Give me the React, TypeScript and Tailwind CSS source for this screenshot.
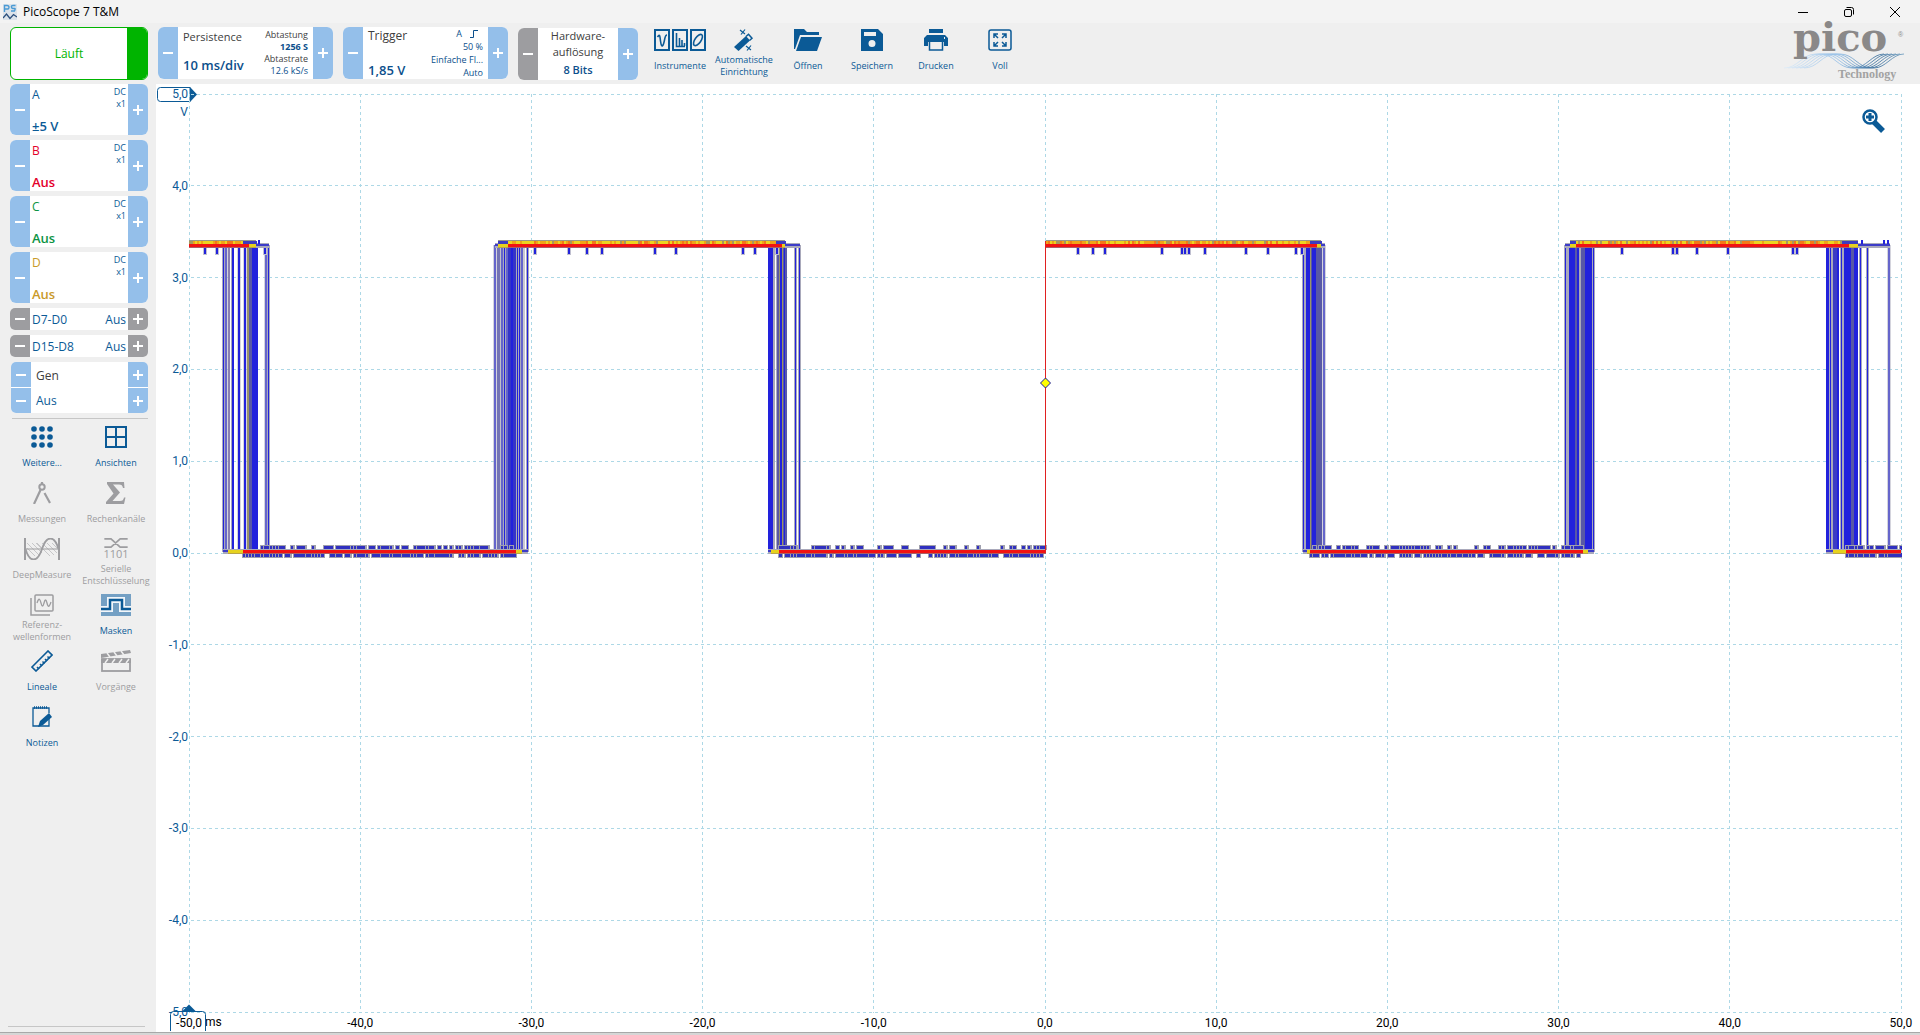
import type { ReactNode } from "react";

const PLOT_W = 1713;
const PLOT_H = 919;

const BLUE = "#2222dc";
const HAZE = "#a9a9bb";
const PURPLE = "#5858a6";
const OLIVE = "#9a9468";
const YELLOW = "#e6d21e";
const RED = "#f21212";

const channels = [
  { name: "A", value: "±5 V", color: "text-[#0b5a96]" },
  { name: "B", value: "Aus", color: "text-[#e4002b]" },
  { name: "C", value: "Aus", color: "text-[#0c9444]" },
  { name: "D", value: "Aus", color: "text-[#c99a2a]" },
];

const yLabels = ["5,0", "4,0", "3,0", "2,0", "1,0", "0,0", "-1,0", "-2,0", "-3,0", "-4,0", "-5,0"];
const xLabels = ["-50,0", "-40,0", "-30,0", "-20,0", "-10,0", "0,0", "10,0", "20,0", "30,0", "40,0", "50,0"];

// single edges, drawn as a thin line with a soft border
const edges = [
  34.5, 37, 43.5, 50, 56, 77, 79.5, 306, 310, 313, 315.5, 318, 328.5, 330.5, 333, 338.5, 588.5, 592,
  606.5, 610.5, 1114.5, 1135, 1376.5, 1404.5, 1641.5, 1652.5, 1671.5, 1678.5, 1700,
];

// bundles of edges: x, width, colour
const bundles: [number, number, string][] = [
  [39, 2, "#8a80b0"],
  [43, 2, BLUE],
  [49, 2, BLUE],
  [55, 2, BLUE],
  [58, 2, OLIVE],
  [60, 3, PURPLE],
  [63, 6, BLUE],
  [308, 3, "#7474b4"],
  [319, 8, "#3535c8"],
  [322, 2, BLUE],
  [334, 2, "#c9c9d2"],
  [579, 5, BLUE],
  [584, 2, HAZE],
  [588, 2, PURPLE],
  [590, 1, OLIVE],
  [591, 2, BLUE],
  [593, 1, OLIVE],
  [594, 4, PURPLE],
  [595, 1, BLUE],
  [1115, 2, HAZE],
  [1117, 4, BLUE],
  [1121, 1, OLIVE],
  [1122, 2, PURPLE],
  [1123, 4, BLUE],
  [1127, 6, PURPLE],
  [1378, 2, HAZE],
  [1380, 6, BLUE],
  [1386, 2, PURPLE],
  [1388, 2, BLUE],
  [1390, 2, HAZE],
  [1392, 4, PURPLE],
  [1396, 7, BLUE],
  [1637, 3, BLUE],
  [1642, 2, HAZE],
  [1644, 4, "#3d3dc4"],
  [1648, 2, BLUE],
  [1653, 2, HAZE],
  [1655, 7, BLUE],
  [1662, 3, PURPLE],
  [1665, 4, BLUE],
];

const spikes = [
  15, 27, 75, 345, 379, 397, 412, 465, 486, 553, 565, 587, 888, 903, 915, 972, 992, 995, 999, 1015, 1056,
  1078, 1106, 1112, 1432, 1483, 1487, 1507, 1538, 1603, 1607,
];

// blue start, yellow start, red start, red end, yellow end, blue end
const highs = [
  [0, 0, 0, 60, 67, 80],
  [306, 309, 319, 593, 596, 611],
  [857, 857, 857, 1128, 1132, 1136],
  [1376, 1381, 1387, 1660, 1669, 1701],
];
const lows = [
  [34, 39, 54, 327, 333, 339],
  [579, 582, 590, 857, 857, 857],
  [1114, 1118, 1121, 1394, 1399, 1405],
  [1637, 1644, 1657, 1712, 1712, 1712],
];

function noise(n: number) {
  const v = Math.sin(n * 12.9898) * 43758.5453;
  return v - Math.floor(v);
}

// neighbouring samples tend to share a state, so the noise comes in runs
function clustered(x: number, seed: number) {
  return noise(x + seed) * 0.6 + noise(Math.floor(x / 12) + seed) * 0.4;
}

function Level({ y, seg }: { y: number; seg: number[] }) {
  const [b0, y0, r0, r1, y1, b1] = seg;
  return (
    <>
      <rect x={b0} y={y - 2} width={b1 - b0} height={5} fill={HAZE} />
      <rect x={b0} y={y - 1} width={b1 - b0} height={2} fill="#3c3cc8" />
      <rect x={y0} y={y - 1} width={y1 - y0} height={4} fill="#b8a448" />
      <rect x={y0} y={y - 1} width={y1 - y0} height={3} fill={YELLOW} />
      <rect x={r0} y={y - 1} width={r1 - r0} height={4} fill="#a86068" />
      <rect x={r0} y={y - 1} width={r1 - r0} height={3} fill={RED} />
    </>
  );
}

function HighNoise({ seg }: { seg: number[] }) {
  const start = seg[0] === 0 ? 0 : seg[1];
  const end = seg[4];
  const cells = [];
  for (let x = start; x < end; x += 2) {
    const r = noise(x);
    const fill = r < 0.12 ? "#a8985c" : r < 0.45 ? "#f0a418" : r < 0.62 ? "#f47818" : "#ecd420";
    const edge = x < seg[2] || x > seg[3] - 8;
    cells.push(<rect key={x} x={x} y={147} width={2} height={3} fill={edge ? "#3c3cc0" : fill} />);
  }
  return (
    <>
      <rect x={start} y={146} width={end - start} height={2} fill="#99998c" />
      {cells}
    </>
  );
}

function LowNoise({ seg }: { seg: number[] }) {
  const haze = [];
  const core = [];
  for (let x = seg[2]; x < seg[3]; x += 3) {
    if (clustered(x, 7) > 0.4) {
      haze.push(<rect key={`t${x}`} x={x - 1} y={451} width={5} height={5} fill="#a0a0ae" />);
      core.push(<rect key={`t${x}`} x={x} y={452} width={noise(x) > 0.5 ? 3 : 2} height={4} fill="#3030c0" />);
    }
    if (clustered(x, 91) > 0.3) {
      haze.push(<rect key={`b${x}`} x={x - 1} y={459} width={5} height={5} fill="#a0a0ae" />);
      core.push(<rect key={`b${x}`} x={x} y={459} width={noise(x) > 0.5 ? 3 : 2} height={4} fill="#3030c0" />);
    }
  }
  return (
    <>
      {haze}
      {core}
    </>
  );
}

function Plot() {
  const steps = Array.from({ length: 11 }, (_, i) => i);
  return (
    <svg
      viewBox={`0 0 ${PLOT_W} ${PLOT_H}`}
      preserveAspectRatio="none"
      className="block h-0 w-full min-w-0 flex-1"
      role="img"
      aria-label="Persistence"
    >
      <g stroke="#add8e6" strokeWidth={1} strokeDasharray="3 3">
        {steps.map((i) => {
          const x = Math.floor(i * 171.2) + 0.5;
          return <line key={`v${i}`} x1={x} x2={x} y1={0} y2={PLOT_H} />;
        })}
        {steps.map((i) => {
          const y = Math.floor(i * 91.8) + 0.5;
          return <line key={`h${i}`} x1={2} x2={PLOT_W} y1={y} y2={y} />;
        })}
      </g>
      {edges.map((x) => (
        <g key={x}>
          <rect x={x - 1.5} y={151} width={3} height={307} fill={HAZE} />
          <rect x={x - 0.5} y={151} width={1} height={307} fill={BLUE} />
        </g>
      ))}
      {bundles.map(([x, w, fill]) => (
        <rect key={x} x={x} y={151} width={w} height={307} fill={fill} />
      ))}
      {spikes.map((x) => (
        <g key={x}>
          <rect x={x - 1} y={152} width={4} height={9} fill="#c0c0d0" />
          <rect x={x} y={152} width={2} height={8} fill={BLUE} />
        </g>
      ))}
      {lows.map((seg) => (
        <LowNoise key={seg[0]} seg={seg} />
      ))}
      {highs.map((seg) => (
        <Level key={seg[0]} y={151} seg={seg} />
      ))}
      {highs.map((seg) => (
        <HighNoise key={seg[0]} seg={seg} />
      ))}
      {lows.map((seg) => (
        <Level key={seg[0]} y={457} seg={seg} />
      ))}
      {[69, 1672, 1694, 1698].map((x) => (
        <rect key={x} x={x} y={146} width={2} height={4} fill={BLUE} />
      ))}
      <rect x={856} y={147} width={1} height={312} fill="#e02020" />
      <path d="M856.5 284l5 5-5 5-5-5z" fill="#ffff00" stroke="#1a1a9c" />
    </svg>
  );
}

function Icon({ w = 24, children }: { w?: number; children: ReactNode }) {
  return (
    <svg width={w} height={22} viewBox={`0 0 ${w} 22`} fill="none" stroke="currentColor" aria-hidden="true">
      {children}
    </svg>
  );
}

function InstrumentsIcon() {
  return (
    <Icon w={52}>
      <path d="M1 1h14v20H1zM19 1h14v20H19zM37 1h14v20H37z" strokeWidth="2" />
      <path d="M3.500 8C6 4 6 8 6.500 12s1.500 7 3 3 1-9 3.500-9" strokeWidth="1.600" />
      <path d="M22.500 4v13.500H31M25.500 17V9M28 17v-6M30.500 17v-3" strokeWidth="1.600" />
      <ellipse cx="44" cy="11" rx="3" ry="6.500" strokeWidth="1.600" transform="rotate(35 44 11)" />
    </Icon>
  );
}

function WandIcon() {
  return (
    <Icon>
      <path d="M2 18L14 7l4 4.500L6.500 22z" fill="currentColor" stroke="none" />
      <path d="M14 7.500l2.500-2.200 3.500 4-2.500 2.200" strokeWidth="1.500" />
      <path d="M8 1l5 4M13 0.500l-4 5M14 17l5 4M19 16.500l-4 5" strokeWidth="1.200" />
    </Icon>
  );
}

function FolderIcon() {
  return (
    <Icon w={28}>
      <g fill="currentColor" stroke="none">
        <path d="M0 0h10l3 3h12v3H6L1 20H0z" />
        <path d="M7 8h21l-5 14H2z" />
      </g>
    </Icon>
  );
}

function SaveIcon() {
  return (
    <Icon w={22}>
      <path
        d="M0 0h17l5 5v17H0zM3 3v4h12V3zM11 11a3.500 3.500 0 100 7 3.500 3.500 0 000-7z"
        fill="currentColor"
        fillRule="evenodd"
        stroke="none"
      />
    </Icon>
  );
}

function PrintIcon() {
  return (
    <Icon>
      <path d="M5 0h14v4H5zM3 6h18l3 3v8h-4v-4H4v4H0V9z" fill="currentColor" stroke="none" />
      <path d="M5.500 13v8h13v-8" strokeWidth="1.500" />
      <path d="M20 9h1" stroke="#efefef" strokeWidth="2" />
    </Icon>
  );
}

function FullIcon() {
  return (
    <Icon>
      <rect x="1" y="1" width="22" height="20" rx="2" strokeWidth="1.500" />
      <path
        d="M6 9V5h4M6 5l4 4M18 9V5h-4M18 5l-4 4M6 13v4h4M6 17l4-4M18 13v4h-4M18 17l-4-4"
        strokeWidth="1.500"
      />
    </Icon>
  );
}

function MoreIcon() {
  return (
    <Icon w={22}>
      <g fill="currentColor" stroke="none">
        {[3, 11, 19].map((y) => [3, 11, 19].map((x) => <circle key={`${x}-${y}`} cx={x} cy={y} r="2.800" />))}
      </g>
    </Icon>
  );
}

function ViewsIcon() {
  return (
    <Icon w={22}>
      <path d="M1 1h20v20H1zM11 1v20M1 11h20" strokeWidth="2" />
    </Icon>
  );
}

function CompassIcon() {
  return (
    <Icon w={20}>
      <circle cx="10" cy="5" r="2.700" strokeWidth="2" />
      <path d="M10 0v2M8.500 8L2 22M12.500 11L18 21" strokeWidth="2.200" />
    </Icon>
  );
}

function SigmaIcon() {
  return (
    <Icon w={20}>
      <path
        d="M1 0h17l.500 6H17c-.500-2.500-1.500-3.500-4-3.500H7l7 8L6.500 19H14c2.500 0 3.500-1 4-3.500h1.500L18 22H0v-2l7.500-8.500L1 2z"
        fill="currentColor"
        stroke="none"
      />
    </Icon>
  );
}

function DeepMeasureIcon() {
  return (
    <Icon w={36}>
      <path
        d="M3 5l12 12M3 10l8 8M8 5l10 10M13 5l5 5M18 5l12 12M23 5l10 10M28 5l5 5M18 10l8 8M12 5l6 6"
        strokeWidth="0.500"
      />
      <path d="M1 0v22M35 0v22" strokeWidth="2" />
      <path d="M1 11h34" strokeWidth="1.200" />
      <path d="M1.500 11c4 14 12 14 16.500 0s12.500-14 16.500 0" strokeWidth="1.800" />
    </Icon>
  );
}

function SerialIcon() {
  return (
    <span className="flex h-[22px] flex-col items-center">
      <svg width="28" height="12" viewBox="0 0 28 12" fill="none" stroke="currentColor" aria-hidden="true">
        <path d="M0 1h8l11 10h9M0 11h8L19 1h9" strokeWidth="2" />
      </svg>
      <span className="text-[11px] leading-3">1101</span>
    </span>
  );
}

function ReferenceIcon() {
  return (
    <Icon>
      <path d="M1 4v17h19" strokeWidth="1.500" />
      <rect x="5" y="1" width="18" height="16" rx="1" strokeWidth="1.500" />
      <path d="M7 9c2-6 3-4 4 0s2 4 3 0 2-4 3 0 2 5 4-1" strokeWidth="1.300" />
    </Icon>
  );
}

function MasksIcon() {
  return (
    <Icon w={30}>
      <path d="M0 0h30v22H0z" fill="#74a0c4" stroke="none" />
      <path d="M0 15h9V6h12v9h9" stroke="#f2f6fa" strokeWidth="6" />
      <path d="M0 15h9V6h12v9h9" strokeWidth="2.500" />
    </Icon>
  );
}

function RulerIcon() {
  return (
    <Icon w={22}>
      <path d="M1 17L17 1l4 4L5 21z" strokeWidth="1.600" />
      <path d="M8 19l-2-2M11 16l-2-2M13.500 13.500l-2-2M16 11l-2-2M18.500 8.500l-2-2" strokeWidth="1.500" />
    </Icon>
  );
}

function ActionsIcon() {
  return (
    <Icon w={30}>
      <rect x="1" y="9" width="28" height="12" strokeWidth="1.800" />
      <path d="M0 9h30v4H0zM0 4L29 0l1 3L0 8z" fill="currentColor" stroke="none" />
      <path
        d="M4 13l3-4M11 13l3-4M18 13l3-4M25 13l3-4M6 3l3 4M13 2l3 4M20 1l3 4"
        stroke="#efefef"
        strokeWidth="1.500"
      />
    </Icon>
  );
}

function NotesIcon() {
  return (
    <Icon w={20}>
      <path d="M17 12v8H1V2h16v5" strokeWidth="1.300" />
      <path d="M2 1.500h14" strokeWidth="2.500" strokeDasharray="1 1" />
      <path d="M6 21l2-6L17 7l3 4-9 8z" fill="currentColor" stroke="none" />
    </Icon>
  );
}

const tools = [
  { label: "Instrumente", icon: <InstrumentsIcon /> },
  { label: "Automatische Einrichtung", icon: <WandIcon /> },
  { label: "Öffnen", icon: <FolderIcon /> },
  { label: "Speichern", icon: <SaveIcon /> },
  { label: "Drucken", icon: <PrintIcon /> },
  { label: "Voll", icon: <FullIcon /> },
];

const sideTools = [
  { label: "Weitere...", icon: <MoreIcon />, off: false },
  { label: "Ansichten", icon: <ViewsIcon />, off: false },
  { label: "Messungen", icon: <CompassIcon />, off: true },
  { label: "Rechenkanäle", icon: <SigmaIcon />, off: true },
  { label: "DeepMeasure", icon: <DeepMeasureIcon />, off: true },
  { label: "Serielle Entschlüsselung", icon: <SerialIcon />, off: true },
  { label: "Referenz- wellenformen", icon: <ReferenceIcon />, off: true },
  { label: "Masken", icon: <MasksIcon />, off: false },
  { label: "Lineale", icon: <RulerIcon />, off: false },
  { label: "Vorgänge", icon: <ActionsIcon />, off: true },
  { label: "Notizen", icon: <NotesIcon />, off: false },
];

function Step({ plus = false, gray = false, label }: { plus?: boolean; gray?: boolean; label: string }) {
  return (
    <button
      type="button"
      aria-label={label}
      className={`flex w-5 shrink-0 items-center justify-center text-white ${gray ? "bg-[#9d9da0]" : "bg-[#94bfea]"}`}
    >
      <svg width="10" height="10" viewBox="0 0 10 10" stroke="currentColor" strokeWidth="2" aria-hidden="true">
        <path d={plus ? "M0 5h10M5 0v10" : "M0 5h10"} />
      </svg>
    </button>
  );
}

function ToolButton({ label, icon, off = false }: { label: string; icon: ReactNode; off?: boolean }) {
  return (
    <button
      type="button"
      disabled={off}
      className={`flex h-14 flex-col items-center gap-[3px] ${off ? "text-[#9d9da0]" : "text-[#0b5a96]"}`}
    >
      {icon}
      <span className="flex h-6 w-16 items-center justify-center text-center text-[9px] leading-3">{label}</span>
    </button>
  );
}

function TitleBar() {
  return (
    <header className="flex h-[23px] items-center bg-[#f3f3f3] pr-0.5 pl-[3px] text-black">
      <svg width="14" height="16" viewBox="0 0 14 16" fill="none" aria-hidden="true">
        <path d="M0 0h14v16H0z" fill="#dce3ea" />
        <path d="M1.500 8V1.500H4q2 0 2 1.800T4 5H2M12.500 1.500H10q-2 0-1.500 1.700T11 4.500t.500 2.500H8" stroke="#4a9ad4" strokeWidth="1.400" />
        <path d="M0 14l3.500-4L7 14.500l3.500-4L14 13" stroke="#2c4f7c" strokeWidth="1.300" />
      </svg>
      <h1 className="ml-1.5 text-xs leading-4">PicoScope 7 T&amp;M</h1>
      <div className="ml-auto flex">
        <button type="button" aria-label="Minimieren" className="flex w-[46px] items-center justify-center">
          <svg width="10" height="10" viewBox="0 0 10 10" stroke="currentColor">
            <path d="M0 5.500h10" />
          </svg>
        </button>
        <button type="button" aria-label="Verkleinern" className="flex w-[46px] items-center justify-center">
          <svg width="10" height="10" viewBox="0 0 10 10" fill="none" stroke="currentColor">
            <rect x="0.500" y="2.500" width="7" height="7" rx="1.500" />
            <path d="M2.500 0.500h5a2 2 0 012 2v5" />
          </svg>
        </button>
        <button type="button" aria-label="Schließen" className="flex w-[46px] items-center justify-center">
          <svg width="10" height="10" viewBox="0 0 10 10" stroke="currentColor">
            <path d="M0 0l10 10M10 0L0 10" />
          </svg>
        </button>
      </div>
    </header>
  );
}

function Logo() {
  return (
    <svg
      width="122"
      height="56"
      viewBox="0 0 122 56"
      fill="none"
      role="img"
      aria-label="pico Technology"
      className="overflow-visible"
    >
      <defs>
        <linearGradient id="wave" x1="0" x2="120" y1="0" y2="0" gradientUnits="userSpaceOnUse">
          <stop offset="0" stopColor="#dbeaf8" />
          <stop offset="0.450" stopColor="#8fbce6" />
          <stop offset="0.750" stopColor="#2f6696" />
          <stop offset="1" stopColor="#6a9cc0" />
        </linearGradient>
      </defs>
      <g stroke="url(#wave)" strokeWidth="0.800">
        {[0, 4, 8, 12, 16, 20].map((d) => (
          <path key={d} d={`M${d - 2} 41c14 0 18-14 32-14h4c14 0 18 14 32 14h2c12 0 18-14 30-14`} />
        ))}
      </g>
      <text x="7" y="24" fill="#8a8888" className="font-['DejaVu_Serif',serif] text-[40px] font-bold">
        pico
      </text>
      <text x="112" y="10" fill="#8a8888" className="font-['Liberation_Sans',sans-serif] text-[7px]">
        ®
      </text>
      <text x="52" y="51" fill="#a2a2a2" className="font-['Liberation_Serif',serif] text-xs font-bold">
        Technology
      </text>
    </svg>
  );
}

function Toolbar() {
  return (
    <div className="flex h-[61px] items-start bg-[#efefef] pt-1 pr-3 pl-2.5">
      <button
        type="button"
        className="flex h-[53px] w-[138px] shrink-0 overflow-hidden rounded-md border border-[#00b400] bg-white text-xs text-[#00b400]"
      >
        <span className="flex h-full flex-1 items-center justify-center">Läuft</span>
        <span className="h-full w-5 bg-[#00b400]" />
      </button>

      <div className="ml-2.5 flex h-[52px] w-[175px] shrink-0 overflow-hidden rounded-md bg-white">
        <Step label="Zeitbasis verringern" />
        <button type="button" className="flex flex-1 justify-between pr-[5px] pl-[5px]">
          <span className="flex h-full flex-col justify-between pt-0.5 pb-1.5 text-left">
            <span className="text-[11px] leading-4 text-[#404040]">Persistence</span>
            <span className="text-[13px] leading-4 font-semibold text-[#0b4f8c]">10 ms/div</span>
          </span>
          <span className="flex flex-col pt-0.5 text-right text-[9px] leading-3 text-[#404040]">
            <span>Abtastung</span>
            <span className="font-bold text-[#0b4f8c]">1256 S</span>
            <span>Abtastrate</span>
            <span className="text-[#0b4f8c]">12.6 kS/s</span>
          </span>
        </button>
        <Step plus label="Zeitbasis erhöhen" />
      </div>

      <div className="ml-2.5 flex h-[52px] w-[165px] shrink-0 overflow-hidden rounded-md bg-white">
        <Step label="Schwelle verringern" />
        <button type="button" className="flex flex-1 justify-between pr-[5px] pl-[5px]">
          <span className="flex h-full flex-col justify-between pt-px pb-px text-left">
            <span className="text-xs leading-4 text-[#404040]">Trigger</span>
            <span className="text-[13px] leading-4 font-semibold text-[#0b4f8c]">1,85 V</span>
          </span>
          <span className="flex flex-col items-end text-[9px] leading-[13px] text-[#0b4f8c]">
            <span className="flex items-center gap-2 pr-[5px]">
              A
              <svg width="8" height="8" viewBox="0 0 8 8" fill="none" stroke="currentColor" aria-hidden="true">
                <path d="M0 7.500h3.500v-7H8" />
              </svg>
            </span>
            <span>50 %</span>
            <span>Einfache Fl...</span>
            <span>Auto</span>
          </span>
        </button>
        <Step plus label="Schwelle erhöhen" />
      </div>

      <div className="mt-px ml-2.5 flex h-[52px] w-[120px] shrink-0 overflow-hidden rounded-md bg-white">
        <Step gray label="Auflösung verringern" />
        <button type="button" className="flex flex-1 flex-col items-center text-[11px] leading-4 text-[#404040]">
          <span>Hardware-</span>
          <span>auflösung</span>
          <span className="pt-0.5 font-semibold text-[#0b4f8c]">8 Bits</span>
        </button>
        <Step plus label="Auflösung erhöhen" />
      </div>

      <nav className="ml-2.5 flex shrink-0 pt-0.5">
        {tools.map((t) => (
          <ToolButton key={t.label} label={t.label} icon={t.icon} />
        ))}
      </nav>

      <div className="ml-auto shrink-0">
        <Logo />
      </div>
    </div>
  );
}

function Sidebar() {
  return (
    <aside className="flex w-[156px] shrink-0 flex-col bg-[#efefef]">
      <div className="flex flex-col gap-[5px] pr-2 pl-2.5">
        {channels.map((c) => (
          <div key={c.name} className="flex h-[51px] overflow-hidden rounded-md bg-white">
            <Step label={`Kanal ${c.name} verringern`} />
            <button type="button" className="flex flex-1 justify-between pr-0.5 pl-0.5">
              <span className={`flex h-full flex-col justify-between pt-[3px] pb-px text-left ${c.color}`}>
                <span className="text-xs leading-4">{c.name}</span>
                <span className="text-[13px] leading-4 font-semibold">{c.value}</span>
              </span>
              <span className="flex flex-col pt-0.5 text-right text-[9px] leading-3 text-[#0b5a96]">
                <span>DC</span>
                <span>x1</span>
              </span>
            </button>
            <Step plus label={`Kanal ${c.name} erhöhen`} />
          </div>
        ))}
        {["D7-D0", "D15-D8"].map((d) => (
          <div key={d} className="flex h-[22px] overflow-hidden rounded-[5px] bg-white">
            <Step gray label={`${d} verringern`} />
            <button
              type="button"
              className="flex flex-1 items-center justify-between px-0.5 pt-0.5 text-xs leading-4 text-[#0b5a96]"
            >
              <span>{d}</span>
              <span>Aus</span>
            </button>
            <Step gray plus label={`${d} erhöhen`} />
          </div>
        ))}
        <div className="ml-px flex flex-col gap-px overflow-hidden rounded-[5px] bg-white text-xs leading-4">
          <div className="flex h-[25px]">
            <Step label="Generator verringern" />
            <button type="button" className="flex flex-1 items-center pt-0.5 pl-[5px] text-[#404040]">
              Gen
            </button>
            <Step plus label="Generator erhöhen" />
          </div>
          <div className="flex h-[25px]">
            <Step label="Ausgang verringern" />
            <button type="button" className="flex flex-1 items-center pl-[5px] text-[#0b5a96]">
              Aus
            </button>
            <Step plus label="Ausgang erhöhen" />
          </div>
        </div>
      </div>
      <hr className="mt-[5px] mr-2 ml-3 border-[#c6c6c6]" />
      <nav className="grid grid-cols-2 justify-items-center pt-[7px] pr-[3px] pl-[5px]">
        {sideTools.map((t) => (
          <ToolButton key={t.label} label={t.label} icon={t.icon} off={t.off} />
        ))}
      </nav>
      <hr className="mt-auto mr-[11px] mb-[5px] ml-2 border-[#c6c6c6]" />
    </aside>
  );
}

function Chart() {
  return (
    <main className="flex min-w-0 flex-1 bg-white pt-2.5 pr-[18px] font-['Roboto',sans-serif] text-xs leading-4">
      <div className="relative mb-5 flex w-[33px] shrink-0 flex-col justify-between text-[#0b5a96]">
        {yLabels.map((l) => (
          <span key={l} className="flex h-0 items-center justify-end pr-px">
            {l}
          </span>
        ))}
        <span className="absolute top-2.5 right-px">V</span>
        <svg width="40" height="16" viewBox="0 0 40 16" fill="none" className="absolute -top-[7px] left-px" aria-hidden="true">
          <path d="M33 .500H3.500a3 3 0 00-3 3v8a3 3 0 003 3H33z" stroke="#0b5a96" />
          <path d="M33 0l7 7.500-7 7.500z" fill="#0b5a96" />
        </svg>
      </div>
      <div className="relative flex min-w-0 flex-1 flex-col">
        <Plot />
        <div className="mr-px flex h-[19px] items-center justify-between text-black">
          {xLabels.map((l) => (
            <span key={l} className="flex w-0 justify-center">
              {l}
            </span>
          ))}
        </div>
        <span className="absolute bottom-0.5 left-4 text-black">ms</span>
        <svg width="36" height="28" viewBox="0 0 36 28" fill="none" className="absolute bottom-0 -left-[19px]" aria-hidden="true">
          <path d="M.500 27V10.500a3 3 0 013-3h29a3 3 0 013 3V27" stroke="#0b5a96" />
          <path d="M12 7.500l7-7 7 7z" fill="#0b5a96" />
        </svg>
        <button type="button" aria-label="Vergrößern" className="absolute top-[15px] right-4 text-[#0b5a96]">
          <svg width="24" height="24" viewBox="0 0 24 24" fill="none" aria-hidden="true">
            <circle cx="8" cy="8" r="6.500" stroke="currentColor" strokeWidth="2.500" />
            <path d="M8 4v8M4 8h8" stroke="currentColor" strokeWidth="3" />
            <path d="M12 13l9 9" stroke="currentColor" strokeWidth="5.500" />
          </svg>
        </button>
      </div>
    </main>
  );
}

export default function App() {
  return (
    <div className="flex min-h-screen flex-col bg-[#efefef] font-['Open_Sans','Noto_Sans',sans-serif]">
      <TitleBar />
      <Toolbar />
      <div className="flex flex-1">
        <Sidebar />
        <Chart />
      </div>
      <footer className="h-[3px] border-t border-[#a8a8a8] bg-[#d6d6d6]" />
    </div>
  );
}
